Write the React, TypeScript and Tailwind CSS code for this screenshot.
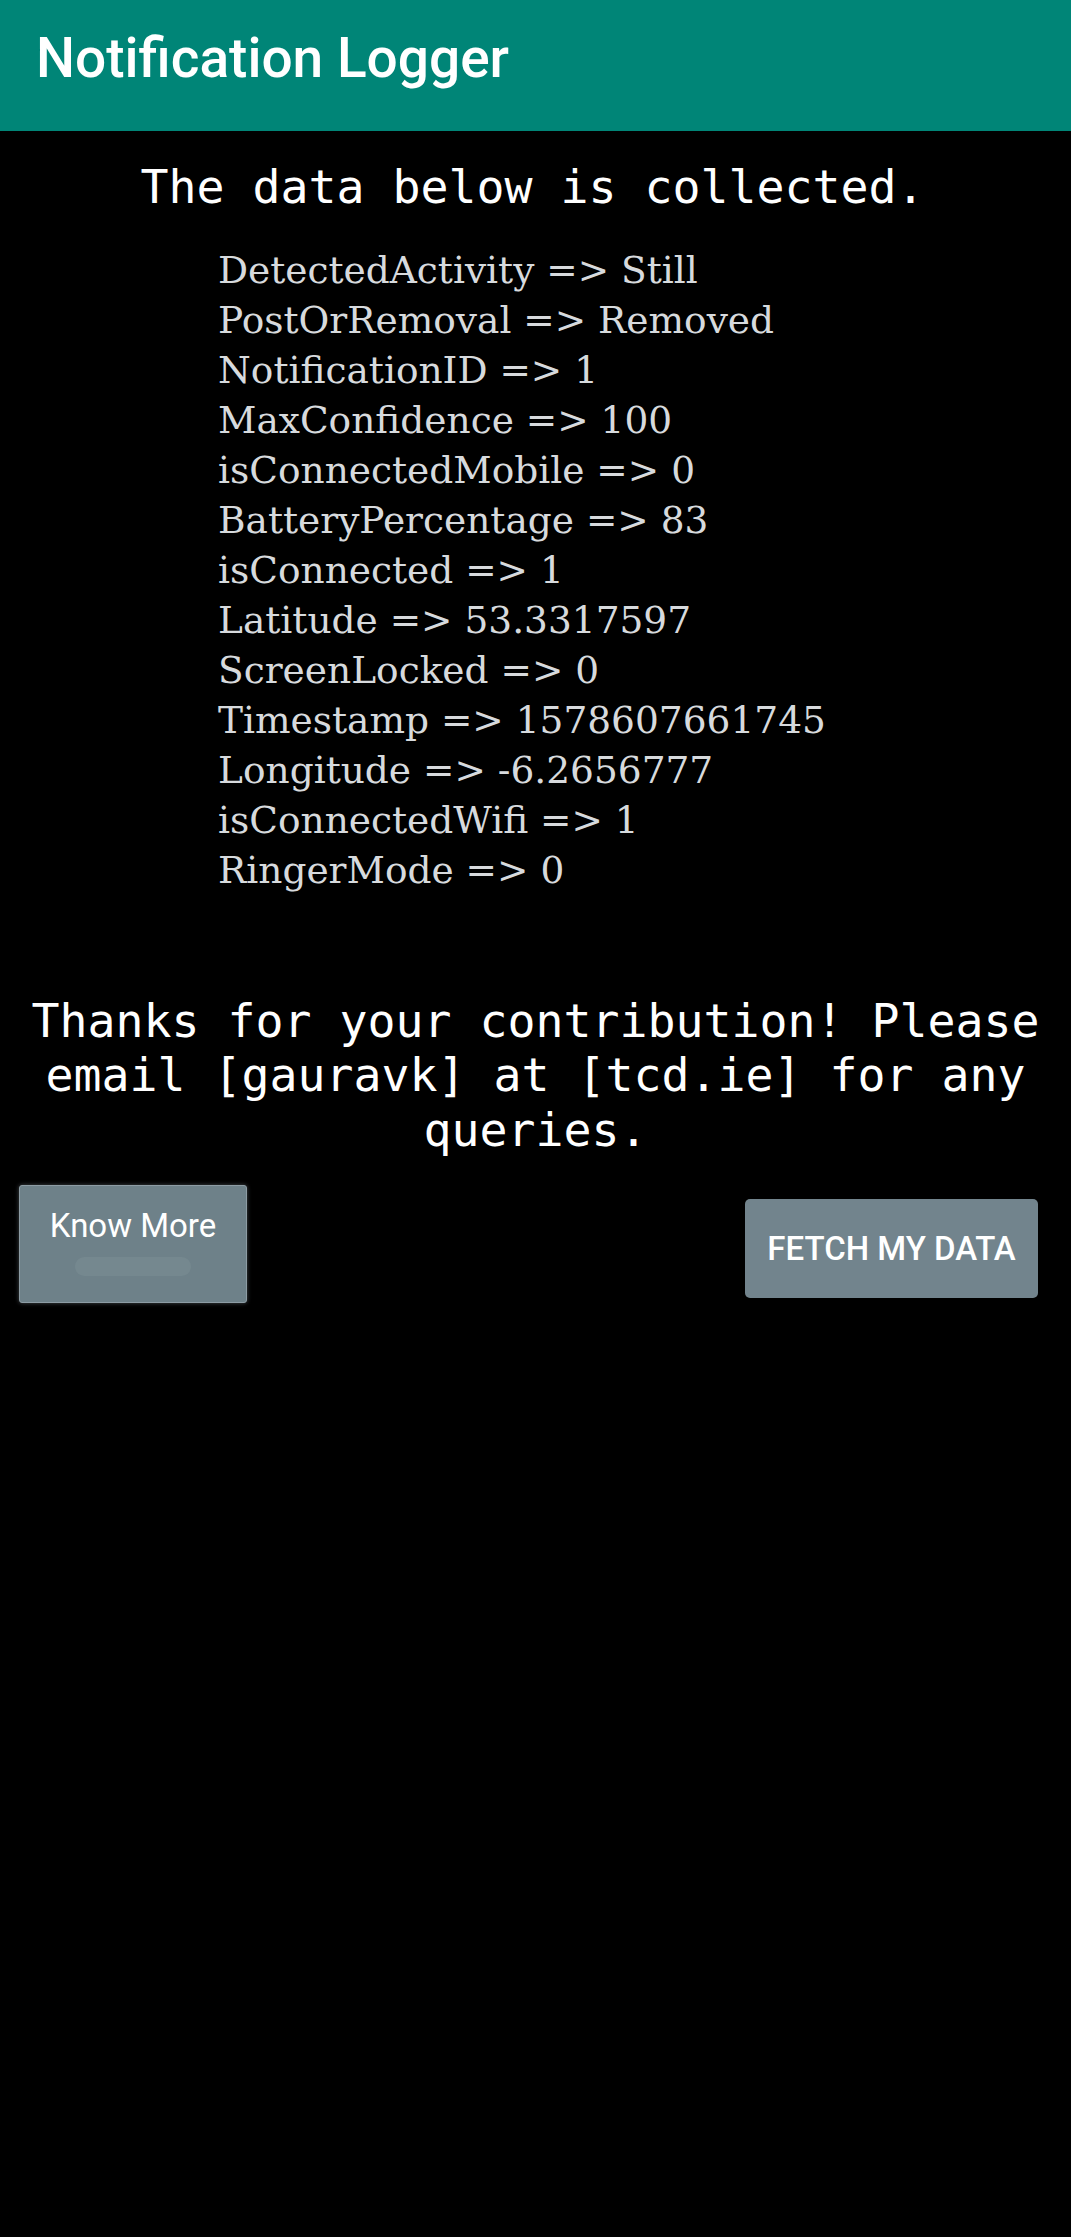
const rows: [string, string][] = [
  ['DetectedActivity', 'Still'],
  ['PostOrRemoval', 'Removed'],
  ['NotificationID', '1'],
  ['MaxConfidence', '100'],
  ['isConnectedMobile', '0'],
  ['BatteryPercentage', '83'],
  ['isConnected', '1'],
  ['Latitude', '53.3317597'],
  ['ScreenLocked', '0'],
  ['Timestamp', '1578607661745'],
  ['Longitude', '-6.2656777'],
  ['isConnectedWifi', '1'],
  ['RingerMode', '0'],
]

export default function App() {
  return (
    <div className="min-h-[2237px] bg-black">
      <header className="h-[131px] bg-[#008577] px-[36px] pt-[26px]">
        <h1 className="font-['Roboto',sans-serif] text-[55px] font-medium leading-[64px] text-white">
          Notification Logger
        </h1>
      </header>

      <p className="mt-[22px] pr-[6px] text-center font-['DejaVu_Sans_Mono',monospace] text-[46.5px] text-white">
        The data below is collected.
      </p>

      <div className="mt-[22px] pl-[218px] font-['DejaVu_Serif',serif] text-[37.5px] leading-[50px] text-[#d7dadd]">
        {rows.map(([k, v]) => (
          <div key={k}>
            {k} =&gt; {v}
          </div>
        ))}
      </div>

      <p className="mt-[99px] px-[18px] text-center font-['DejaVu_Sans_Mono',monospace] text-[46.5px] leading-[54.5px] text-white">
        Thanks for your contribution! Please email [gauravk] at [tcd.ie] for any queries.
      </p>

      <div className="mt-[28px] flex items-start justify-between pl-[19px] pr-[33px] font-['Roboto',sans-serif]">
        <button className="flex h-[118px] w-[228px] flex-col items-center rounded-[3px] border border-[#8d9ca4] bg-[#6e8189] pt-[21px] shadow-[0_0_4px_rgba(200,215,225,0.35)]">
          <span className="text-[33px] leading-[38px] text-white">Know More</span>
          <span className="mt-[12px] h-[19px] w-[116px] rounded-full bg-[#75888f]" />
        </button>
        <button className="mt-[14px] flex h-[99px] w-[293px] items-center justify-center rounded-[5px] bg-[#72848d] text-[33px] font-medium text-white">
          FETCH MY DATA
        </button>
      </div>
    </div>
  )
}
